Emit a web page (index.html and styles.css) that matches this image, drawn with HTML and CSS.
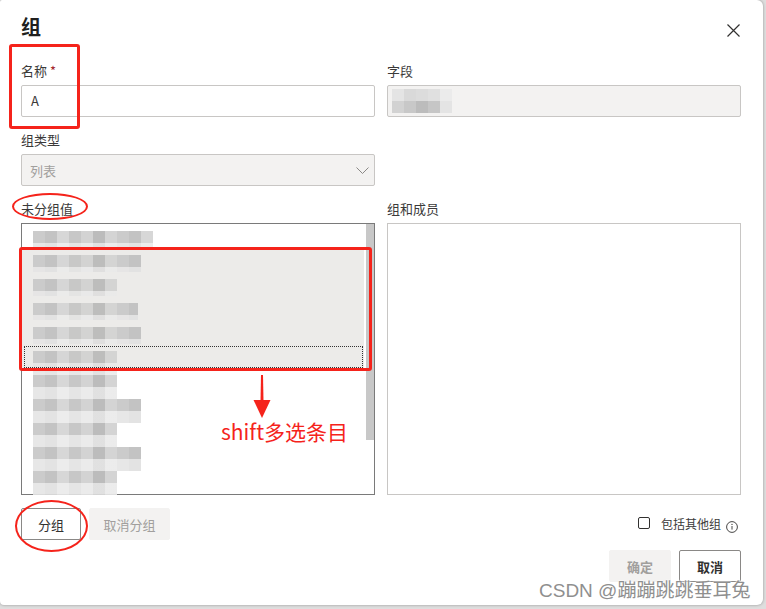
FILE: index.html
```html
<!DOCTYPE html>
<html lang="zh-CN">
<head>
<meta charset="utf-8">
<title>组</title>
<link rel="stylesheet" href="styles.css">
</head>
<body>
<div class="page">
  <div class="dialog">
    <div class="header">
      <h1 class="title">组</h1>
      <button class="close" aria-label="关闭">
        <svg width="13" height="13" viewBox="0 0 13 13"><path d="M0.5 0.5 L12.5 12.5 M12.5 0.5 L0.5 12.5" stroke="#323130" stroke-width="1.2" fill="none"/></svg>
      </button>
    </div>

    <div class="grid">
      <div class="field">
        <label class="label">名称 <span class="req">*</span></label>
        <div class="input">A</div>
      </div>
      <div class="field">
        <label class="label">字段</label>
        <div class="input disabled">
          <span class="mosaic-field">
            <span class="mrow top"><i></i><i></i><i></i><i></i><i></i></span>
            <span class="mrow bottom"><i></i><i></i><i></i><i></i><i></i></span>
          </span>
        </div>
      </div>

      <div class="field row2">
        <label class="label">组类型</label>
        <div class="select">
          <span>列表</span>
          <svg width="13" height="7" viewBox="0 0 13 7"><path d="M0.5 0.5 L6.5 6.5 L12.5 0.5" stroke="#8a8886" stroke-width="1" fill="none"/></svg>
        </div>
      </div>
      <div class="field row2"></div>

      <div class="field row3">
        <label class="label">未分组值</label>
        <div class="listbox">
          <div class="rows">
            <div class="item"><span class="blur" style="width:120px"></span></div>
            <div class="item sel"><span class="blur" style="width:108px"></span></div>
            <div class="item sel"><span class="blur" style="width:84px"></span></div>
            <div class="item sel"><span class="blur" style="width:105px"></span></div>
            <div class="item sel"><span class="blur" style="width:108px"></span></div>
            <div class="item sel focus"><span class="blur" style="width:84px"></span></div>
            <div class="item"><span class="blur" style="width:84px"></span></div>
            <div class="item"><span class="blur" style="width:108px"></span></div>
            <div class="item"><span class="blur" style="width:84px"></span></div>
            <div class="item"><span class="blur" style="width:108px"></span></div>
            <div class="item"><span class="blur" style="width:84px"></span></div>
          </div>
          <div class="scroll"><div class="thumb"></div></div>
        </div>
      </div>
      <div class="field row3">
        <label class="label">组和成员</label>
        <div class="listbox light"></div>
      </div>
    </div>

    <div class="actions">
      <div class="btns">
        <button class="btn">分组</button>
        <button class="btn disabled narrow">取消分组</button>
      </div>
      <label class="check">
        <span class="box"></span>
        <span class="check-text">包括其他组</span>
        <svg class="info" width="12" height="12" viewBox="0 0 12 12"><circle cx="6" cy="6" r="5.4" stroke="#323130" stroke-width="0.9" fill="none"/><path d="M6 5 V8.6" stroke="#323130" stroke-width="0.9"/><circle cx="6" cy="3.4" r="0.6" fill="#323130"/></svg>
      </label>
    </div>

    <div class="footer">
      <button class="btn strong disabled">确定</button>
      <button class="btn strong">取消</button>
    </div>
  </div>

  <div class="mark rect-name"></div>
  <div class="mark oval-label"></div>
  <div class="mark rect-sel"></div>
  <div class="mark oval-btn"></div>
  <svg class="arrow" width="18" height="46" viewBox="0 0 18 46"><path d="M8 0 H10 L10.5 26 H7.5 Z" fill="#f5231b"/><path d="M0.5 25 H17.5 L9 43 Z" fill="#f5231b"/></svg>
  <div class="note">shift多选条目</div>
  <div class="watermark">CSDN @蹦蹦跳跳垂耳兔</div>
</div>
</body>
</html>
```

FILE: styles.css
```css
* { box-sizing: border-box; }
html, body { margin: 0; padding: 0; }
body {
  background: #dedede;
  font-family: "Noto Sans CJK SC", "Noto Sans", sans-serif;
  color: #323130;
  width: 766px;
  height: 609px;
  overflow: hidden;
}
.page { position: relative; width: 766px; height: 609px; }

.dialog {
  width: 763px;
  height: 605px;
  background: #fff;
  border-radius: 2px 6px 6px 4px;
  box-shadow: 0 0 3px rgba(0,0,0,0.35);
  padding: 13px 22px 0 21px;
}

.header { display: flex; justify-content: space-between; align-items: flex-start; height: 30px; }
.title { margin: 0; font-size: 20px; font-weight: 700; line-height: 28px; color: #201f1e; }
.close {
  border: 0; background: none; padding: 0; margin: 11px 1px 0 0;
  width: 13px; height: 13px; display: block;
}
.close svg { display: block; }

.grid {
  display: grid;
  grid-template-columns: 354px 354px;
  column-gap: 12px;
  margin-top: 18px;
}
.field.row2 { margin-top: 13px; }
.field.row3 { margin-top: 13px; }

.label {
  display: block;
  font-size: 13px;
  line-height: 20px;
  height: 20px;
  margin-bottom: 4px;
  color: #3b3a39;
}
.req { color: #a4262c; }

.input {
  height: 32px;
  border: 1px solid #c8c6c4;
  border-radius: 2px;
  font-size: 13px;
  line-height: 30px;
  padding: 0 9px;
  background: #fff;
  color: #3b3a39;
}
.input.disabled { background: #f3f2f1; padding: 0 4px; display: flex; align-items: center; }

.mosaic-field { display: flex; flex-direction: column; }
.mrow { display: flex; }
.mrow i { display: block; width: 12px; height: 12px; }
.mrow.top i:nth-child(1) { background: #e4e4e4; }
.mrow.top i:nth-child(2) { background: #d9d9d9; }
.mrow.top i:nth-child(3) { background: #dcdcdc; }
.mrow.top i:nth-child(4) { background: #e0e0e0; }
.mrow.top i:nth-child(5) { background: #ebebeb; }
.mrow.bottom i:nth-child(1) { background: #d2d2d2; }
.mrow.bottom i:nth-child(2) { background: #c8c8c8; }
.mrow.bottom i:nth-child(3) { background: #bcbcbc; }
.mrow.bottom i:nth-child(4) { background: #c6c6c6; }
.mrow.bottom i:nth-child(5) { background: #e4e4e4; }

.select {
  height: 32px;
  border: 1px solid #c8c6c4;
  border-radius: 2px;
  background: #f3f2f1;
  font-size: 13px;
  color: #a19f9d;
  padding: 0 5px 0 8px;
  display: flex;
  align-items: center;
  justify-content: space-between;
}
.select svg { display: block; margin-top: 1px; }

.listbox {
  height: 272px;
  border: 1px solid #7a7a7a;
  display: flex;
  background: #fff;
}
.listbox.light { border-color: #c8c6c4; }
.rows { width: 342px; display: flex; flex-direction: column; }
.item { position: relative; height: 24px; padding: 7px 0 0 11px; }
.item.sel { background: #ecebe9; }
.item.focus::after {
  content: "";
  position: absolute;
  left: 2px; right: 1px; top: 2px; bottom: 0;
  border: 1px dotted #333;
}
.blur {
  display: inline-block;
  vertical-align: top;
  height: 24px;
  background:
    linear-gradient(to bottom, transparent 0 12px, rgba(255,255,255,0.55) 12px 24px),
    repeating-linear-gradient(90deg, #c6c6c6 0 12px, #bdbdbd 12px 24px, #d3d3d3 24px 36px, #c2c2c2 36px 48px, #cfcfcf 48px 60px, #b5b5b5 60px 72px, #d0d0d0 72px 84px);
  opacity: 0.9;
}
.item.sel .blur { opacity: 0.85; }
.scroll { width: 8px; margin-left: 2px; }
.thumb { height: 216px; background: #c8c8c8; }

.actions {
  margin-top: 13px;
  display: flex;
  justify-content: space-between;
  align-items: center;
}
.btns { display: flex; gap: 8px; }
.btn {
  font-family: inherit;
  height: 32px;
  font-size: 13px;
  color: #323130;
  background: #fff;
  border: 1px solid #8a8886;
  border-radius: 2px;
  padding: 0 16px;
  min-width: 58px;
}
.btn.narrow { padding: 0 13px; width: 81px; }
.btn.disabled { background: #f3f2f1; border-color: #f3f2f1; color: #a19f9d; }
.btn.strong { font-weight: 700; min-width: 62px; }

.check { display: flex; align-items: center; font-size: 12px; margin-right: 3px; margin-top: -2px; }
.box {
  width: 12px; height: 12px;
  border: 1px solid #323130;
  border-radius: 2px;
  margin-right: 11px;
}
.check-text { margin-right: 5px; color: #3b3a39; }
.info { display: block; margin-top: 8px; }

.footer {
  margin-top: 10px;
  display: flex;
  justify-content: flex-end;
  gap: 8px;
}

.mark {
  position: absolute;
  border: 3px solid #f5231b;
}
.rect-name { left: 9px; top: 44px; width: 71px; height: 85px; border-radius: 3px; }
.oval-label { left: 12px; top: 193px; width: 76px; height: 27px; border-radius: 50%; border-width: 2.5px; }
.rect-sel { left: 19px; top: 247px; width: 353px; height: 124px; border-radius: 3px; }
.oval-btn { left: 15px; top: 500px; width: 73px; height: 52px; border-radius: 50%; border-width: 2.5px; }
.arrow { position: absolute; left: 253px; top: 375px; }
.note {
  position: absolute;
  left: 221px; top: 417px;
  font-size: 21px;
  line-height: 28px;
  color: #f5231b;
}
.watermark {
  position: absolute;
  left: 539px; top: 578px;
  font-family: "Liberation Sans", "Noto Sans CJK SC", sans-serif;
  font-size: 19px;
  line-height: 26px;
  color: #8f8f8f;
  text-shadow: 0 0 2px #fff, 0 0 2px #fff;
}
```
